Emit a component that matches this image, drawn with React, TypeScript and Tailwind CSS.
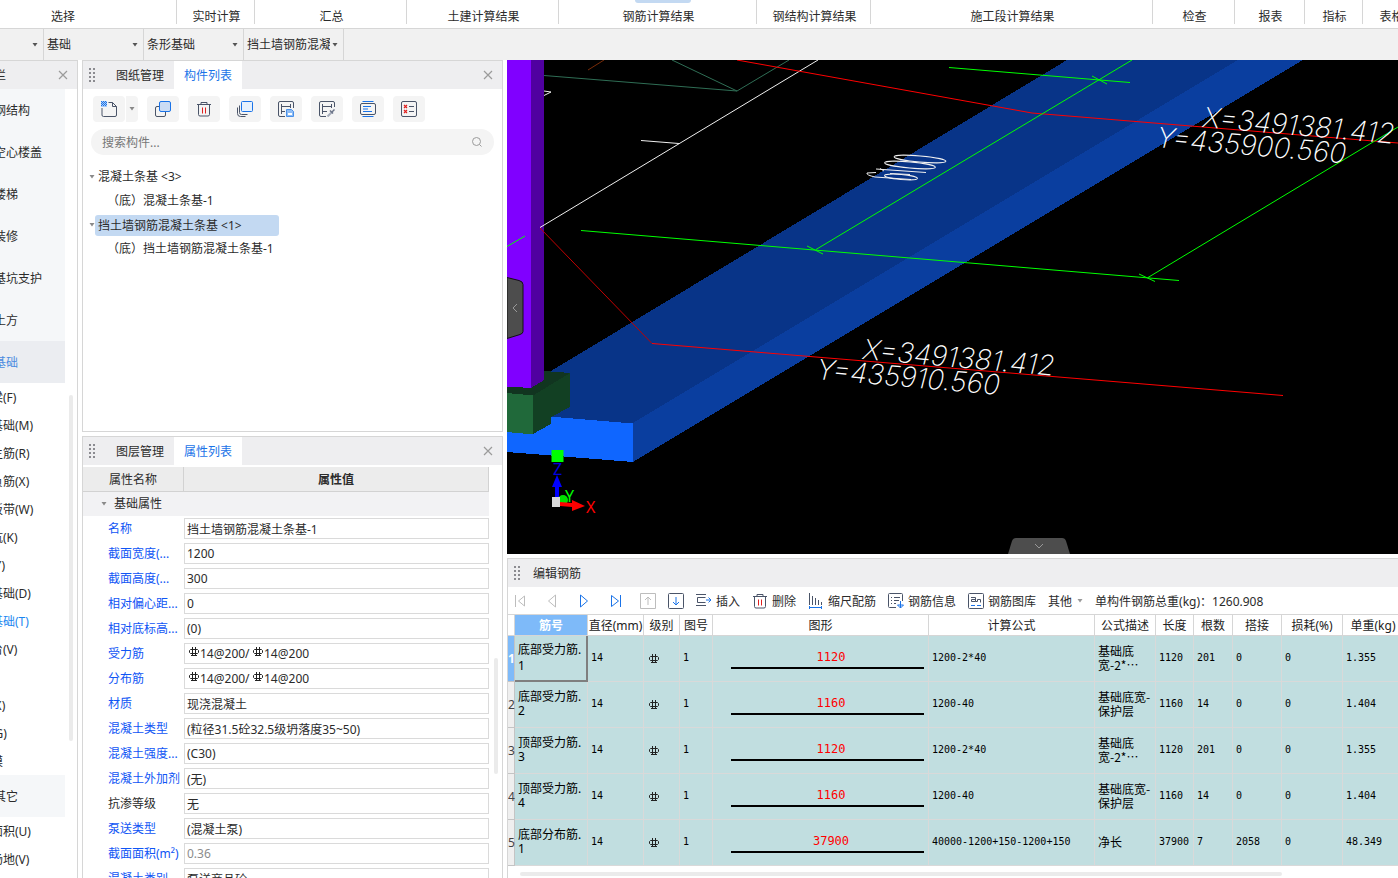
import type { ReactNode } from "react";
import clsx from "clsx";

const ribbonGroups = [
  { label: "选择", className: "w-[177px] pr-[52px]" },
  { label: "实时计算", className: "w-[78px]" },
  { label: "汇总", className: "w-[152px]" },
  { label: "土建计算结果", className: "w-[152px]" },
  { label: "钢筋计算结果", className: "w-[198px]", active: true },
  { label: "钢结构计算结果", className: "w-[114px]" },
  { label: "施工段计算结果", className: "w-[282px]" },
  { label: "检查", className: "w-[82px]" },
  { label: "报表", className: "w-[70px]" },
  { label: "指标", className: "w-[58px]" },
  { label: "表格", className: "w-[56px]" },
];

const filters = [
  { name: "楼层", value: "", className: "w-[44px]" },
  { name: "构件分类", value: "基础", className: "w-[100px]" },
  { name: "构件类型", value: "条形基础", className: "w-[100px]" },
  { name: "构件", value: "挡土墙钢筋混凝土条基-1", className: "w-[100px]" },
];

const categories = ["钢结构", "空心楼盖", "楼梯", "装修", "基坑支护", "土方", "基础"];

const foundationItems = [
  "基础梁(F)",
  "筏板基础(M)",
  "筏板主筋(R)",
  "筏板负筋(X)",
  "基础板带(W)",
  "集水坑(K)",
  "柱墩(Y)",
  "独立基础(D)",
  "条形基础(T)",
  "桩承台(V)",
  "桩(U)",
  "垫层(X)",
  "地沟(G)",
  "砖胎膜",
];

const properties: { label: string; value: string | string[]; plain?: boolean; readOnly?: boolean }[] = [
  { label: "名称", value: "挡土墙钢筋混凝土条基-1" },
  { label: "截面宽度(...", value: "1200" },
  { label: "截面高度(...", value: "300" },
  { label: "相对偏心距...", value: "0" },
  { label: "相对底标高...", value: "(0)" },
  { label: "受力筋", value: ["14@200/", "14@200"] },
  { label: "分布筋", value: ["14@200/", "14@200"] },
  { label: "材质", value: "现浇混凝土" },
  { label: "混凝土类型", value: "(粒径31.5砼32.5级坍落度35~50)" },
  { label: "混凝土强度...", value: "(C30)" },
  { label: "混凝土外加剂", value: "(无)" },
  { label: "抗渗等级", value: "无", plain: true },
  { label: "泵送类型", value: "(混凝土泵)" },
  { label: "截面面积(m²)", value: "0.36", readOnly: true },
  { label: "混凝土类别", value: "泵送商品砼" },
];

const columns = [
  { title: "", width: "w-[7px]" },
  { title: "筋号", width: "w-[73px]" },
  { title: "直径(mm)", width: "w-[56px]" },
  { title: "级别", width: "w-[36px]" },
  { title: "图号", width: "w-[33px]" },
  { title: "图形", width: "w-[216px]" },
  { title: "计算公式", width: "w-[166px]" },
  { title: "公式描述", width: "w-[61px]" },
  { title: "长度", width: "w-[38px]" },
  { title: "根数", width: "w-[39px]" },
  { title: "搭接", width: "w-[49px]" },
  { title: "损耗(%)", width: "w-[61px]" },
  { title: "单重(kg)", width: "w-[61px]" },
];

const bars = [
  { name: ["底部受力筋.", "1"], formula: "1200-2*40", desc: ["基础底", "宽-2*⋯"], length: "1120", count: "201", lap: "0", weight: "1.355" },
  { name: ["底部受力筋.", "2"], formula: "1200-40", desc: ["基础底宽-", "保护层"], length: "1160", count: "14", lap: "0", weight: "1.404" },
  { name: ["顶部受力筋.", "3"], formula: "1200-2*40", desc: ["基础底", "宽-2*⋯"], length: "1120", count: "201", lap: "0", weight: "1.355" },
  { name: ["顶部受力筋.", "4"], formula: "1200-40", desc: ["基础底宽-", "保护层"], length: "1160", count: "14", lap: "0", weight: "1.404" },
  { name: ["底部分布筋.", "1"], formula: "40000-1200+150-1200+150", desc: ["净长"], length: "37900", count: "7", lap: "2058", weight: "48.349" },
];

function Icon({ children, className = "size-4" }: { children: ReactNode; className?: string }) {
  return (
    <svg viewBox="0 0 16 16" className={clsx("shrink-0", className)} fill="none" stroke="#4a5468" aria-hidden="true">
      {children}
    </svg>
  );
}

function Caret({ className }: { className?: string }) {
  return (
    <svg viewBox="0 0 6 4" className={clsx("h-1 w-1.5 shrink-0", className)} aria-hidden="true">
      <path d="M.5 0h5L3 3.500z" fill="currentColor" />
    </svg>
  );
}

function Grip() {
  return (
    <svg viewBox="0 0 7 15" className="h-[15px] w-[7px] shrink-0 fill-[#8b8b90]" aria-hidden="true">
      {[0, 4, 8, 12].map((y) => (
        <path key={y} d={`M0 ${y}h2v2h-2zM4 ${y}h2v2h-2z`} />
      ))}
    </svg>
  );
}

function CloseButton() {
  return (
    <button type="button" aria-label="关闭" className="p-1">
      <svg viewBox="0 0 10 10" className="size-[10px]" stroke="#9b9b9b" strokeWidth="1.2" aria-hidden="true">
        <path d="M1 1l8 8M9 1l-8 8" />
      </svg>
    </button>
  );
}

// HRB400 rebar grade mark
function RebarMark({ className }: { className?: string }) {
  return (
    <svg
      viewBox="0 0 10 10"
      className={clsx("size-[10px] shrink-0", className)}
      fill="none"
      stroke="#222"
      aria-hidden="true"
    >
      <path d="M3.500 0v9M6.500 0v9M1.500 2.500h7l1 1v2l-1 1h-7l-1-1v-2zM2 8.500h6" />
    </svg>
  );
}

function TrashIcon() {
  return (
    <Icon>
      <path d="M1 3.500h14M5 3V1.500h6V3M2.500 4v9.500q0 1.500 1.500 1.500h8q1.500 0 1.500-1.500V4" />
      <path d="M6.500 6.500v6M9.500 6.500v6" stroke="#e02020" />
    </Icon>
  );
}

function Ribbon() {
  return (
    <div className="flex h-[29px] shrink-0 overflow-hidden border-b border-[#d6d6d6] bg-white">
      {ribbonGroups.map((group) => (
        <div
          key={group.label}
          className={clsx(
            "relative flex h-6 shrink-0 items-center justify-center whitespace-nowrap border-r border-[#d6d6d6] pl-0.5 pt-2.5",
            group.className
          )}
        >
          {group.active && <span className="absolute left-[76px] top-0 h-[3px] w-14 rounded-b bg-[#c3d9f2]" />}
          <span>{group.label}</span>
        </div>
      ))}
    </div>
  );
}

function FilterBar() {
  return (
    <div className="flex h-[31px] shrink-0 bg-[#f1f1f1]">
      {filters.map((filter) => (
        <div key={filter.name} className={clsx("relative shrink-0 border-r border-[#d6d6d6]", filter.className)}>
          <select
            aria-label={filter.name}
            className="h-full w-full appearance-none overflow-hidden bg-transparent pl-[3px] pr-[13px] pt-px"
          >
            <option>{filter.value}</option>
          </select>
          <Caret className="pointer-events-none absolute right-[5px] top-[14px] text-[#555]" />
        </div>
      ))}
    </div>
  );
}

function Sidebar() {
  return (
    <aside className="relative w-[78px] shrink-0 overflow-hidden border-r border-t border-[#d6d6d6]">
      {/* scrolled sideways, the first 40px are out of view */}
      <div className="-ml-10 w-[117px]">
        <div className="flex h-7 items-center justify-between bg-[#eeeef0] pl-2.5 pr-[5px]">
          <span className="pt-0.5">导航栏</span>
          <CloseButton />
        </div>
        <nav className="w-[105px]">
          {categories.map((item) => (
            <button
              key={item}
              type="button"
              className={clsx(
                "block h-[42px] w-full pl-[34px] pt-0.5 text-left",
                item === "基础" ? "bg-[#ebedf1] text-[#4a8be0]" : "bg-[#f5f7f9]"
              )}
            >
              {item}
            </button>
          ))}
          {foundationItems.map((item) => (
            <button
              key={item}
              type="button"
              className={clsx("block h-7 w-full pl-[7px] pt-0.5 text-left", item === "条形基础(T)" && "text-[#1a86f0]")}
            >
              {item}
            </button>
          ))}
          <button type="button" className="block h-[42px] w-full bg-[#f5f7f9] pl-[34px] pt-0.5 text-left">
            其它
          </button>
          <button type="button" className="block h-7 w-full pl-[7px] pt-0.5 text-left">建筑面积(U)</button>
          <button type="button" className="block h-7 w-full pl-[7px] pt-0.5 text-left">平整场地(V)</button>
        </nav>
      </div>
      <span className="absolute right-1 top-[334px] h-[346px] w-1 rounded-full bg-[#ebebeb]" />
    </aside>
  );
}

function PanelTabs({ tabs }: { tabs: [string, string] }) {
  return (
    <div className="flex h-7 shrink-0 items-center bg-[#eeeef0] pl-1.5 pr-[5px]">
      <Grip />
      <div role="tablist" className="ml-2.5 flex h-full flex-1">
        <button type="button" role="tab" aria-selected="false" className="w-[68px] pt-0.5">
          {tabs[0]}
        </button>
        <button type="button" role="tab" aria-selected="true" className="w-[68px] bg-white pt-0.5 text-[#1a73e8]">
          {tabs[1]}
        </button>
      </div>
      <CloseButton />
    </div>
  );
}

function ToolButton({ label, children }: { label: string; children: ReactNode }) {
  return (
    <button
      type="button"
      aria-label={label}
      className="flex h-[26px] w-8 items-center justify-center rounded bg-[#f4f4f4]"
    >
      {children}
    </button>
  );
}

function ComponentPanel() {
  return (
    <section className="flex h-[372px] shrink-0 flex-col border border-[#d6d6d6]">
      <PanelTabs tabs={["图纸管理", "构件列表"]} />
      <div className="flex gap-[9px] px-2.5 pt-[7px]">
        <div className="flex gap-px">
          <ToolButton label="新建">
            <Icon>
              <path d="M7.500 1.500h4l4 4V14q0 1.500-1.500 1.500H2.500Q1 15.500 1 14V7M11.500 1.500v4h4" />
              <path d="M0 0h6v6H0z" fill="#a9cbf7" stroke="none" />
              <path d="M0 .5h6M0 2.500h6M0 4.500h6" stroke="#1a73e8" strokeDasharray="1 1" />
              <path d="M0 1.500h6M0 3.500h6" stroke="#1a73e8" strokeDasharray="1 1" strokeDashoffset="1" />
            </Icon>
          </ToolButton>
          <button
            type="button"
            aria-label="新建选项"
            className="flex h-[26px] w-3 items-center justify-center rounded-r bg-[#f4f4f4]"
          >
            <Caret className="text-[#888]" />
          </button>
        </div>
        <ToolButton label="复制">
          <Icon>
            <path d="M5 5.500H2Q.5 5.500.5 7v7q0 1.500 1.500 1.500h7q1.500 0 1.500-1.500v-3" />
            <rect x="4.500" y=".5" width="11" height="10" rx="1.500" fill="#cbdcf4" stroke="#1a73e8" />
          </Icon>
        </ToolButton>
        <ToolButton label="删除">
          <TrashIcon />
        </ToolButton>
        <ToolButton label="层间复制">
          <Icon>
            <path d="M2.500 4.500v7q0 2 2 2h6M.5 6.500v6q0 3 3 3h5" />
            <rect x="4.500" y=".5" width="11" height="10" rx="1" fill="#e6f1fd" stroke="#1a73e8" />
          </Icon>
        </ToolButton>
        <ToolButton label="存档">
          <Icon>
            <path d="M7 15.500H2q-1.500 0-1.500-1.500V2Q.5.500 2 .5h12q1.500 0 1.500 1.500v5M3.500 3v10M3.500 5.500h9M12.500 3v4M3.500 10.500H7" />
            <path d="M8.500 8.500h5l2 2v5h-7z" fill="#8dbcf5" stroke="#4a90e8" />
            <path d="M10 12h4v2h-4z" fill="#fff" stroke="none" />
          </Icon>
        </ToolButton>
        <ToolButton label="提取">
          <Icon>
            <path d="M7 15.500H2q-1.500 0-1.500-1.500V2Q.5.500 2 .5h12q1.500 0 1.500 1.500v4M3.500 3v10M3.500 5.500h9M12.500 3v4M3.500 10.500H8" />
            <path d="M8.500 15.500l4-4" stroke="#a4abb9" strokeWidth="2" />
            <path d="M11 9.500l3 3M13 11l2.500-2.500" stroke="#6b7488" strokeWidth="1.500" />
          </Icon>
        </ToolButton>
        <ToolButton label="排列">
          <Icon>
            <path d="M2.500 .5h11M2.500 15.500h11" stroke="#1a73e8" />
            <rect x=".5" y="2.500" width="15" height="11" rx="1.500" />
            <path d="M3 5.500h8M3 8h5M3 10.500h9" stroke="#1a73e8" />
          </Icon>
        </ToolButton>
        <ToolButton label="列表">
          <Icon>
            <rect x=".5" y=".5" width="15" height="15" rx="1.500" />
            <path d="M8 5.500h5M8 10.500h5" />
            <path d="M3 4l3 3M6 4l-3 3M3 9l3 3M6 9l-3 3" stroke="#e02020" strokeWidth="1.200" />
          </Icon>
        </ToolButton>
      </div>
      <label className="mx-2 mt-[7px] flex h-[26px] shrink-0 items-center rounded-full bg-[#f4f4f4] pl-[11px] pr-3">
        <input
          type="text"
          aria-label="搜索构件"
          placeholder="搜索构件..."
          className="min-w-0 flex-1 bg-transparent pt-0.5 outline-none placeholder:text-[#777]"
        />
        <svg viewBox="0 0 10 10" className="size-[10px]" fill="none" stroke="#9b9b9b" aria-hidden="true">
          <circle cx="4.500" cy="4.500" r="4" />
          <path d="M7.500 7.500l2 2" />
        </svg>
      </label>
      <ul role="tree" className="mt-2.5 leading-6">
        <li role="treeitem" className="flex items-center pl-1.5">
          <Caret className="text-[#8a8a8a]" />
          <span className="pl-[3px]">混凝土条基 &lt;3&gt;</span>
        </li>
        <li role="treeitem" className="pl-6">（底）混凝土条基-1</li>
        <li role="treeitem" aria-selected="true" className="flex h-6 items-center pl-1.5">
          <Caret className="text-[#8a8a8a]" />
          <span className="h-[21px] w-[184px] rounded-[3px] bg-[#c3d9f2] pl-[3px] leading-[21px]">
            挡土墙钢筋混凝土条基 &lt;1&gt;
          </span>
        </li>
        <li role="treeitem" className="pl-6">（底）挡土墙钢筋混凝土条基-1</li>
      </ul>
    </section>
  );
}

function PropertyValue({ id, value, readOnly }: { id: string; value: string | string[]; readOnly?: boolean }) {
  if (Array.isArray(value)) {
    return (
      <div className="flex h-[21px] items-center border border-[#dadada] pl-1">
        <RebarMark className="mb-1" />
        <input id={id} type="text" defaultValue={value[0]} className="h-full w-[54px] pl-px outline-none" />
        <RebarMark className="mb-1" />
        <input type="text" aria-label="第二排" defaultValue={value[1]} className="h-full w-20 pl-px outline-none" />
      </div>
    );
  }
  return (
    <input
      id={id}
      type="text"
      defaultValue={value}
      readOnly={readOnly}
      className={clsx(
        "block h-[21px] w-full border border-[#dadada] bg-white pl-0.5 outline-none",
        readOnly && "text-[#8c8c8c]"
      )}
    />
  );
}

function PropertyPanel() {
  return (
    <section className="relative flex min-h-0 flex-1 flex-col overflow-hidden border border-b-0 border-[#d6d6d6]">
      <PanelTabs tabs={["图层管理", "属性列表"]} />
      <div className="min-h-0 flex-1 overflow-hidden pr-[13px] pt-0.5">
        <table className="w-full table-fixed border-separate border-spacing-0">
          <thead>
            <tr className="h-[25px] bg-[#ececec]">
              <th className="w-[101px] border-b border-r border-[#d2d2d2] p-0 pt-px font-normal">属性名称</th>
              <th className="border-b border-r border-[#d2d2d2] p-0 pt-px font-bold">属性值</th>
            </tr>
          </thead>
          <tbody>
            <tr className="h-6">
              <td colSpan={2} className="bg-[#f2f2f4] p-0">
                <div className="flex items-center gap-[7px] pl-[18px]">
                  <Caret className="text-[#8a8a8a]" />
                  基础属性
                </div>
              </td>
            </tr>
            {properties.map((prop, i) => (
              <tr key={prop.label} className="h-[25px]">
                <td className="p-0">
                  <label
                    htmlFor={`prop-${i}`}
                    className={clsx("block whitespace-nowrap pl-[25px]", !prop.plain && "text-[#0f55f5]")}
                  >
                    {prop.label}
                  </label>
                </td>
                <td className="p-0">
                  <PropertyValue id={`prop-${i}`} value={prop.value} readOnly={prop.readOnly} />
                </td>
              </tr>
            ))}
          </tbody>
        </table>
      </div>
      <span className="absolute right-1 top-[221px] h-[116px] w-1 rounded-full bg-[#ebebeb]" />
    </section>
  );
}

function ModelView() {
  return (
    <div className="relative min-h-0 flex-1 overflow-hidden bg-black">
      <svg
        viewBox="507 60 891 494"
        preserveAspectRatio="xMinYMin slice"
        className="h-full w-full"
        fill="none"
        aria-label="三维视图"
      >
        <g shapeRendering="crispEdges">
          {/* strip footing */}
          <path d="M507 398L551 371L1067 60H1240L633 426L507 416z" fill="#083488" />
          <path d="M633 423L1238 60H1303L633 462z" fill="#0a3e9f" />
          <path d="M507 413L633 423.500V462L507 452z" fill="#0f66ff" />
          {/* column base */}
          <path d="M507 368L570 373V376L533 398L507 396z" fill="#113520" />
          <path d="M533 395.500L570 373V407L551 417V424L533 434z" fill="#124023" />
          <path d="M507 393L533 395.500V434.500L507 432z" fill="#20693a" />
          {/* column */}
          <path d="M507 60H531V388L507 386.500z" fill="#8000ff" />
          <path d="M531 60H544V380L531 388z" fill="#5000a0" />
        </g>

        <path d="M544 75.500L737 91L789 60M672 60L737 91" stroke="#2f6e55" />
        <path d="M588 70L604 60" stroke="#7a2c08" />
        <path d="M540 227.500L818 60M641 140.500L679 143.500M544 91L551 92L544 95.500" stroke="#f0f0f0" />
        <path d="M540 228L652 343.500" stroke="#c00000" />
        <path d="M652 343.500L1283 395.500M737 60L1032 113L1398 143" stroke="#ff0000" />
        <g stroke="#00ff00">
          <path d="M581 230.500L1179 280.500M949 67.500L1130 82.500" />
          <path d="M816 249.500L1132 60M1148 277.500L1398 127M507 246.500L525 236" />
          <path d="M807 246L823 254M1092 76L1107 84M1139 274L1155 281.500" />
        </g>
        <g stroke="#f0f0f0">
          <ellipse cx="920" cy="159" rx="26" ry="3" transform="rotate(5 920 159)" />
          <ellipse cx="910" cy="165" rx="25.500" ry="3" transform="rotate(5 910 165)" />
          <path d="M876 169L926 172.500M880 168.500L884 171" />
          <ellipse cx="901" cy="177" rx="16.500" ry="2.500" transform="rotate(5 901 177)" />
          <path d="M910 174.500L890 173.500M911 179.500L875 177Q866 175 867 173L876 172.500" />
        </g>

        <g className="fill-white font-['Inter',sans-serif] text-[28px] font-extralight italic">
          <text transform="translate(862 359) rotate(5)">X=3491381.412</text>
          <text transform="translate(816 379) rotate(5)">Y=435910.560</text>
          <text transform="translate(1202 127) rotate(5)">X=3491381.412</text>
          <text transform="translate(1156 147) rotate(5)">Y=435900.560</text>
        </g>

        {/* axis gizmo */}
        <path d="M551.500 450h12v12h-12z" fill="#00ff00" />
        <path d="M555 500V487H552L557 475L562 487H559V500z" fill="#0000ff" />
        <circle cx="563" cy="500" r="5" fill="#00e000" />
        <path d="M560 502L572 503V500L585 506L572 511V507L560 506z" fill="#ff0000" />
        <path d="M552 497h8v10h-8z" fill="#d8d8d8" />
        <g className="font-['Noto_Sans',sans-serif] text-[16px]">
          <text x="553" y="475" fill="#0000e0">Z</text>
          <text x="565" y="502" fill="#00ff00">Y</text>
          <text x="586" y="513" fill="#ff0000">X</text>
        </g>
      </svg>
      <button type="button" aria-label="收起左侧面板" className="absolute left-0 top-[217px]">
        <svg viewBox="0 0 17 62" className="h-[62px] w-[17px]" fill="none" aria-hidden="true">
          <path d="M0 .5l12 3q4 1 4 4v47q0 2-3 3L0 61.500z" fill="#4d4d4d" stroke="#111" />
          <path d="M10 27l-4 4 4 4" stroke="#999" />
        </svg>
      </button>
      <button type="button" aria-label="收起下方面板" className="absolute bottom-0 left-[501px]">
        <svg viewBox="0 0 62 16" className="h-4 w-[62px]" fill="none" aria-hidden="true">
          <path d="M0 16L4 3q1-3 4-3h46q3 0 4 3l4 13z" fill="#4d4d4d" />
          <path d="M27 6l4 4 4-4" stroke="#999" />
        </svg>
      </button>
    </div>
  );
}

function BarButton({ label, icon }: { label: string; icon: ReactNode }) {
  return (
    <button type="button" className="flex items-center gap-1">
      {icon}
      <span className="pt-0.5">{label}</span>
    </button>
  );
}

function RebarToolbar() {
  return (
    <div className="flex h-7 shrink-0 items-center gap-3 overflow-hidden whitespace-nowrap border-b border-[#d6d6d6] pl-1">
      <div className="flex gap-4">
        <button type="button" aria-label="首行">
          <Icon><path d="M3.500 2v12M12.500 3v10L6.500 8z" stroke="#bdbdbd" /></Icon>
        </button>
        <button type="button" aria-label="上一行">
          <Icon><path d="M11.500 2v12L4.500 8z" stroke="#bdbdbd" /></Icon>
        </button>
        <button type="button" aria-label="下一行">
          <Icon><path d="M4.500 2v12L11.500 8z" stroke="#1a73e8" /></Icon>
        </button>
        <button type="button" aria-label="末行">
          <Icon><path d="M3.500 2.500v11L10.500 8zM12.500 2v12" stroke="#1a73e8" /></Icon>
        </button>
        <button type="button" aria-label="上移">
          <Icon><path d="M.5.500h15v15H.5zM8 12V4M5 7l3-3 3 3" stroke="#bdbdbd" /></Icon>
        </button>
      </div>
      <button type="button" aria-label="下移">
        <Icon>
          <rect x=".5" y=".5" width="15" height="15" rx="1" />
          <path d="M8 4v8M5 9l3 3 3-3" stroke="#1a73e8" />
        </Icon>
      </button>
      <BarButton
        label="插入"
        icon={
          <Icon>
            <path d="M0 1.500h10M0 12.500h10M9.500 4.500h-8v5h8" />
            <path d="M10 7h5M12.500 4.500l2.500 2.500-2.500 2.500" stroke="#1a73e8" />
          </Icon>
        }
      />
      <BarButton label="删除" icon={<TrashIcon />} />
      <BarButton
        label="缩尺配筋"
        icon={
          <Icon>
            <path d="M1.500 0v12M4.500 3v9M7.500 5v7M10.500 7v5M13.500 9v3" />
            <path d="M1 14.500h13M1.500 13v3M13.500 13v3" stroke="#1a73e8" />
          </Icon>
        }
      />
      <BarButton
        label="钢筋信息"
        icon={
          <Icon>
            <path d="M8 14.500H1.500q-1 0-1-1v-12q0-1 1-1h12q1 0 1 1V8M3 4.500h1M6 4.500h6M3 7.500h1M6 7.500h5M3 10.500h1M6 10.500h2" />
            <path d="M12.500 8v7M9.500 12l3 3 3-3z" stroke="#1a73e8" />
          </Icon>
        }
      />
      <BarButton
        label="钢筋图库"
        icon={
          <Icon>
            <rect x=".5" y=".5" width="15" height="15" rx="1" />
            <path d="M3 4.500h4.500v4h-4v-2h4M7.500 8.500h2v-2h3v3" />
            <path d="M3 12.500h4M9 12.500h4" stroke="#1a73e8" />
          </Icon>
        }
      />
      <button type="button" className="flex items-center gap-[5px]">
        <span className="pt-0.5">其他</span>
        <Caret className="text-[#999]" />
      </button>
      <span className="pt-0.5">单构件钢筋总重(kg)：1260.908</span>
    </div>
  );
}

const cell = "bg-[#c1dee0] px-[3px] pt-0 text-left";
const gridLine = "border-b border-r border-[#d9d9d9] pb-0.5";

function RebarTable() {
  return (
    <table className="w-[896px] table-fixed border-separate border-spacing-0 whitespace-nowrap text-black">
      <thead>
        <tr className="h-[21px]">
          {columns.map((col) => (
            <th
              key={col.title}
              className={clsx(
                "border-b border-r border-[#d6d6d6] p-0 pt-px leading-[19px]",
                col.width,
                col.title === "筋号" ? "bg-[#7ebaf9] font-bold text-white" : "font-normal text-[#222]"
              )}
            >
              {col.title}
            </th>
          ))}
        </tr>
      </thead>
      <tbody className="font-['DejaVu_Sans_Mono','Noto_Sans_CJK_SC',monospace] text-[10px] leading-[14px]">
        {bars.map((bar, i) => (
          <tr key={i} className="h-[46px]">
            <th
              className={clsx(
                "border-b border-r border-[#c4c4c4] p-0 text-center font-['Noto_Sans'] text-[12px]",
                i === 0 ? "bg-[#7ebaf9] font-bold text-white" : "bg-[#efefef] font-normal text-[#444]"
              )}
            >
              {i + 1}
            </th>
            <td
              className={clsx(
                cell,
                "font-['Noto_Sans','Noto_Sans_CJK_SC',sans-serif] text-[12px]",
                i === 0 ? "border-b-2 border-r-2 border-[#7f7f7f] leading-4" : gridLine
              )}
            >
              {bar.name[0]}
              <br />
              {bar.name[1]}
            </td>
            <td className={clsx(cell, gridLine)}>14</td>
            <td className={clsx(cell, gridLine)}>
              <RebarMark className="ml-[2px] mt-0.5" />
            </td>
            <td className={clsx(cell, gridLine)}>1</td>
            <td className={clsx(cell, gridLine)}>
              <div className="ml-[15px] mr-px border-b-2 border-black pb-[3px] pl-[7px] pt-1 text-center text-[12px] text-[#f00]">
                {bar.length}
              </div>
            </td>
            <td className={clsx(cell, gridLine)}>{bar.formula}</td>
            <td className={clsx(cell, gridLine, "font-['Noto_Sans_CJK_SC',sans-serif] text-[12px]")}>
              {bar.desc[0]}
              {bar.desc[1] && <br />}
              {bar.desc[1]}
            </td>
            <td className={clsx(cell, gridLine)}>{bar.length}</td>
            <td className={clsx(cell, gridLine)}>{bar.count}</td>
            <td className={clsx(cell, gridLine)}>{bar.lap}</td>
            <td className={clsx(cell, gridLine)}>0</td>
            <td className={clsx(cell, gridLine)}>{bar.weight}</td>
          </tr>
        ))}
      </tbody>
    </table>
  );
}

function RebarPanel() {
  return (
    <section className="flex h-[320px] shrink-0 flex-col overflow-hidden border-l border-t border-[#d6d6d6] bg-white">
      <div className="flex h-7 shrink-0 items-center gap-3 bg-[#eeeef0] pl-1.5">
        <Grip />
        <h2 className="pt-0.5">编辑钢筋</h2>
      </div>
      <RebarToolbar />
      <div className="overflow-hidden">
        <RebarTable />
      </div>
      <div className="mt-1.5 px-3">
        <div className="h-1 w-[88%] rounded-full bg-[#ebebeb]" />
      </div>
    </section>
  );
}

export default function App() {
  return (
    <div className="flex h-screen w-full flex-col overflow-hidden bg-white font-['Noto_Sans','Noto_Sans_CJK_SC',sans-serif] text-[12px] leading-4 text-[#2b2b2b]">
      <Ribbon />
      <FilterBar />
      <div className="flex min-h-0 flex-1 gap-1">
        <Sidebar />
        <div className="flex w-[421px] shrink-0 flex-col gap-1">
          <ComponentPanel />
          <PropertyPanel />
        </div>
        <main className="flex min-w-0 flex-1 flex-col gap-1">
          <ModelView />
          <RebarPanel />
        </main>
      </div>
    </div>
  );
}
